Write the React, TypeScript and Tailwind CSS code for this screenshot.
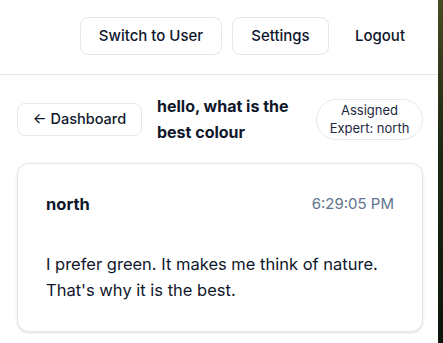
export default function App() {
    return (
        <div className="flex min-h-[343px] w-full bg-white font-['Inter','Noto_Sans',sans-serif] text-slate-900">
            <main className="flex w-[438px] shrink-0 flex-col">
                {/* Top bar */}
                <header className="flex h-[75px] items-start justify-end gap-2.5 border-b border-slate-200 pl-[17px] pr-[15px] pt-[17px]">
                    <button className="h-[38px] w-[142px] rounded-lg border border-slate-200 bg-white text-[15px] font-medium">
                        Switch to User
                    </button>
                    <button className="h-[38px] w-[97px] rounded-lg border border-slate-200 bg-white text-[15px] font-medium">
                        Settings
                    </button>
                    <button className="-ml-0.5 h-[38px] rounded-lg px-[18px] text-[15px] font-medium">
                        Logout
                    </button>
                </header>

                <section className="pl-[17px] pr-[15px] pt-[18px] pb-4">
                    {/* Thread header */}
                    <div className="flex items-center gap-[15px]">
                        <button className="h-[33px] w-[125px] shrink-0 rounded-lg border border-slate-200 bg-white text-[14.5px] font-medium">
                            ← Dashboard
                        </button>
                        <h1 className="min-w-0 flex-1 text-[16px] font-bold leading-[26px]">
                            hello, what is the best colour
                        </h1>
                        <span className="flex h-[41px] w-[107px] shrink-0 items-center justify-center rounded-full border border-slate-200 bg-white px-3 text-center text-[13px] leading-[18px] text-slate-800">
                            Assigned Expert: north
                        </span>
                    </div>

                    {/* Message */}
                    <div className="mt-[18px] rounded-xl border border-slate-200 bg-white p-7 shadow-sm">
                        <div className="flex items-center justify-between">
                            <span className="text-[16.5px] font-bold">north</span>
                            <span className="text-[15px] text-slate-500">6:29:05 PM</span>
                        </div>
                        <p className="mt-[34px] text-[16.5px] leading-[26px]">
                            I prefer green. It makes me think of nature. That's why it is the best.
                        </p>
                    </div>
                </section>
            </main>
            <div className="flex-1 bg-[linear-gradient(180deg,#4a4a22_0%,#1e2a14_40%,#0c140c_100%)]" />
        </div>
    )
}
